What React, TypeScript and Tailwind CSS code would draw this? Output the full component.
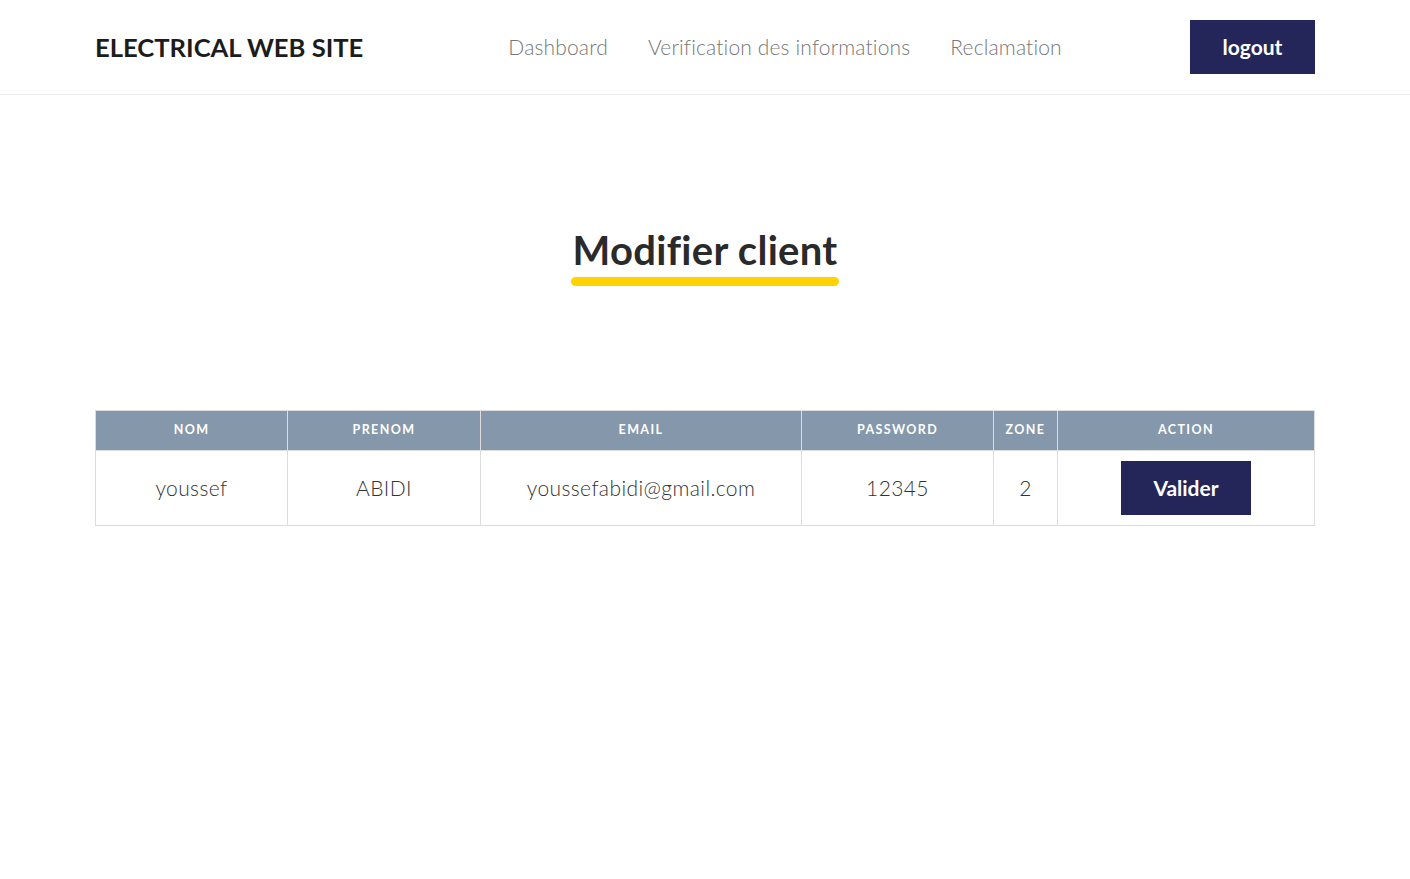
import React from "react";

const font = { fontFamily: "Lato, 'Open Sans', 'Liberation Sans', sans-serif" };

const cols = [
  { label: "NOM", w: "w-[192px]" },
  { label: "PRENOM", w: "w-[193px]" },
  { label: "EMAIL", w: "w-[321px]" },
  { label: "PASSWORD", w: "w-[192px]" },
  { label: "ZONE", w: "w-[64px]" },
  { label: "ACTION", w: "" },
];

const row = ["youssef", "ABIDI", "youssefabidi@gmail.com", "12345", "2"];

export default function App() {
  return (
    <div className="min-h-screen bg-white" style={font}>
      <header className="h-[95px] border-b border-[#eeeeee]">
        <div className="mx-[95px] h-full flex items-center">
          <div className="text-[25.6px] font-bold text-[#1c1c1c]">ELECTRICAL WEB SITE</div>
          <nav className="flex gap-10 ml-[145px] text-[21px] font-light text-[#777777] tracking-[0.15px]">
            <a>Dashboard</a>
            <a>Verification des informations</a>
            <a>Reclamation</a>
          </nav>
          <button className="ml-auto w-[125px] h-[54px] bg-[#242659] text-white text-[21px] font-bold">logout</button>
        </div>
      </header>

      <section className="flex flex-col items-center pt-[132px]">
        <h1 className="text-[40px] font-bold text-[#2a2a2a] leading-[46px] tracking-[0.3px]">Modifier client</h1>
        <div className="mt-[4px] w-[268px] h-[9px] rounded-full bg-[#ffd200]" />
      </section>

      <div className="mx-[95px] mt-[124px]">
        <table className="w-full border-collapse border border-[#dddddd]">
          <thead>
            <tr className="bg-[#8597ab] h-[40px]">
              {cols.map((c) => (
                <th key={c.label} className={`${c.w} border border-[#dddddd] text-[12.5px] font-bold text-white tracking-[1.4px]`}>
                  {c.label}
                </th>
              ))}
            </tr>
          </thead>
          <tbody>
            <tr className="h-[75px]">
              {row.map((v) => (
                <td key={v} className="border border-[#dddddd] text-center text-[21px] font-light text-[#333333] tracking-[0.4px]">{v}</td>
              ))}
              <td className="border border-[#dddddd] text-center">
                <button className="w-[130px] h-[54px] bg-[#242659] text-white text-[21px] font-bold">Valider</button>
              </td>
            </tr>
          </tbody>
        </table>
      </div>
    </div>
  );
}
